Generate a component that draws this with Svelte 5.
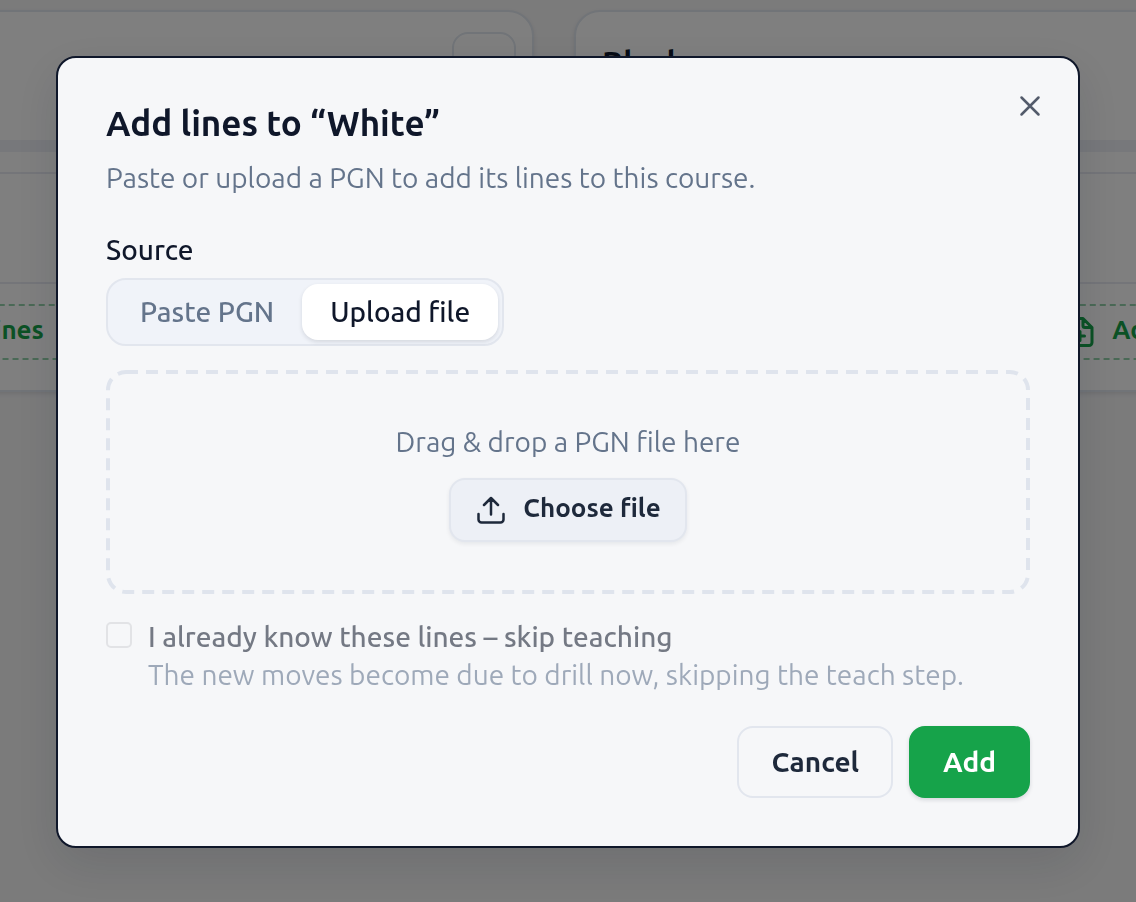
<script lang="ts">
  type Source = 'paste' | 'upload';

  const courses = ['White', 'Black'];
  const tabs: { id: Source; label: string }[] = [
    { id: 'paste', label: 'Paste PGN' },
    { id: 'upload', label: 'Upload file' },
  ];

  let target = $state('White');
  let open = $state(true);
  let source = $state<Source>('upload');
  let pgn = $state('');
  let skipTeaching = $state(false);
  let fileInput = $state<HTMLInputElement>();

  // skipping only makes sense once there is something to add
  let canSkip = $derived(source === 'paste' && pgn.trim() !== '');

  function openFor(course: string) {
    target = course;
    open = true;
  }
</script>

<main class="courses">
  {#each courses as course}
    <section class="course">
      <header class="course-head">
        <h2>{course}</h2>
        <button class="course-menu" type="button" aria-label="Course options"></button>
      </header>
      <div class="track"></div>
      <div class="course-gap"></div>
      <div class="course-body"></div>
      <div class="course-foot">
        <button class="add-lines" type="button" onclick={() => openFor(course)}>
          <svg viewBox="0 0 32 32" aria-hidden="true">
            <path d="M19 2.500H8a3 3 0 0 0-3 3v21a3 3 0 0 0 3 3h17a3 3 0 0 0 3-3V11.500zM19 2.500v7a2 2 0 0 0 2 2h7M16 15.500v9M11.500 20h9" />
          </svg>
          <span>Add lines</span>
        </button>
      </div>
    </section>
  {/each}
</main>

{#if open}
  <div class="backdrop">
    <div class="dialog" role="dialog" aria-modal="true" aria-labelledby="dialog-title">
      <button class="close" type="button" aria-label="Close" onclick={() => (open = false)}>
        <svg viewBox="0 0 24 24" aria-hidden="true"><path d="M3.500 3.500l17 17M20.500 3.500l-17 17" /></svg>
      </button>

      <header class="dialog-head">
        <h1 id="dialog-title">Add lines to “{target}”</h1>
        <p class="muted">Paste or upload a PGN to add its lines to this course.</p>
      </header>

      <div class="field">
        <span class="field-label" id="source-label">Source</span>
        <div class="segmented" role="group" aria-labelledby="source-label">
          {#each tabs as tab}
            <button
              type="button"
              class:active={source === tab.id}
              aria-pressed={source === tab.id}
              onclick={() => (source = tab.id)}
            >
              {tab.label}
            </button>
          {/each}
        </div>
      </div>

      {#if source === 'upload'}
        <div class="dropzone">
          <svg class="outline" aria-hidden="true"><rect rx="18" /></svg>
          <p class="muted">Drag &amp; drop a PGN file here</p>
          <button class="btn choose" type="button" onclick={() => fileInput?.click()}>
            <svg viewBox="0 0 32 32" aria-hidden="true">
              <path d="M16 20.500V4.500M9 11l7-7 7 7M3.500 20v5.500a3 3 0 0 0 3 3h19a3 3 0 0 0 3-3V20" />
            </svg>
            <span>Choose file</span>
          </button>
          <input bind:this={fileInput} type="file" accept=".pgn" aria-label="PGN file" hidden />
        </div>
      {:else}
        <textarea class="pgn" aria-label="PGN" bind:value={pgn}></textarea>
      {/if}

      <div class="skip">
        <input id="skip" type="checkbox" bind:checked={skipTeaching} disabled={!canSkip} />
        <div>
          <label for="skip">I already know these lines – skip teaching</label>
          <p>The new moves become due to drill now, skipping the teach step.</p>
        </div>
      </div>

      <footer>
        <button class="btn" type="button" onclick={() => (open = false)}>Cancel</button>
        <button class="btn primary" type="button">Add</button>
      </footer>
    </div>
  </div>
{/if}

<style>
  :global(body) {
    margin: 0;
    background: #f6f6f7;
    color: #0f172a;
    font-family: Ubuntu, Lato, 'Open Sans', sans-serif;
    font-size: 28px;
  }
  h1,
  h2,
  p {
    margin: 0;
  }
  button {
    font: inherit;
    color: inherit;
    cursor: pointer;
  }
  svg {
    width: 32px;
    height: 32px;
    flex: none;
    fill: none;
    stroke: currentColor;
    stroke-width: 2.5;
    stroke-linecap: round;
    stroke-linejoin: round;
  }

  /* course cards behind the dialog */
  .courses {
    display: grid;
    grid-template-columns: 103% 103%;
    justify-content: center;
    gap: 40px;
    padding: 10px 28px 16px 0;
    overflow: hidden;
  }
  .course {
    border: 2px solid #e2e8f0;
    border-radius: 26px;
    background: #fff;
    box-shadow: 0 2px 4px rgba(15, 23, 42, 0.1);
    overflow: hidden;
  }
  .course-head {
    display: flex;
    justify-content: space-between;
    height: 108px;
    padding: 20px 16px 0 26px;
  }
  .course-head h2 {
    font-size: 32px;
    line-height: 60px;
    font-weight: 700;
  }
  .course-menu {
    width: 64px;
    height: 64px;
    border: 2px solid #e2e8f0;
    border-radius: 16px;
    background: none;
  }
  .track {
    height: 12px;
    background: #eff1f6;
  }
  .course-gap {
    height: 20px;
  }
  .course-body {
    height: 108px;
    border: solid #e9ebf3;
    border-width: 2px 0;
  }
  .course-foot {
    padding: 20px 28px 30px;
  }
  .add-lines {
    display: flex;
    align-items: center;
    justify-content: center;
    gap: 16px;
    width: 100%;
    height: 56px;
    padding: 0;
    border: 2px dashed #95d3ac;
    border-radius: 16px;
    background: none;
    color: #16a34a;
    font-size: 26px;
    font-weight: 700;
  }
  .add-lines svg {
    stroke-width: 3;
  }

  .backdrop {
    position: fixed;
    inset: 0;
    padding: 56px;
    background: rgba(0, 0, 0, 0.5);
    overflow: auto;
  }
  .dialog {
    position: relative;
    display: flex;
    flex-direction: column;
    gap: 24px;
    padding: 48px;
    border: 2px solid #0f172a;
    border-radius: 20px;
    background: #f6f7f9;
    box-shadow: 0 16px 48px rgba(15, 23, 42, 0.12);
  }
  .close {
    position: absolute;
    top: 36px;
    right: 36px;
    display: flex;
    padding: 0;
    border: 0;
    background: none;
    color: #535b6b;
  }
  .close svg {
    width: 24px;
    height: 24px;
  }
  .dialog-head {
    margin-bottom: 12px;
  }
  h1 {
    margin-bottom: 18px;
    font-size: 35px;
    line-height: 34px;
    font-weight: 700;
  }
  .muted {
    color: #64748b;
    line-height: 40px;
  }
  .field-label {
    display: block;
    margin-bottom: 12px;
    line-height: 32px;
    font-weight: 500;
  }
  .segmented {
    display: inline-flex;
    padding: 4px;
    border: 2px solid #e2e6ee;
    border-radius: 20px;
    background: #f0f3f9;
    vertical-align: top;
  }
  .segmented button {
    height: 56px;
    padding: 0 28px 2px;
    border: 0;
    border-radius: 16px;
    background: none;
    color: #64748b;
    font-weight: 500;
  }
  .segmented .active {
    background: #fff;
    color: #0f172a;
    box-shadow: 0 2px 4px rgba(15, 23, 42, 0.12);
  }
  .dropzone {
    position: relative;
    display: flex;
    flex-direction: column;
    align-items: center;
    gap: 16px;
    padding: 52px;
  }
  .outline {
    position: absolute;
    inset: 0;
    width: 100%;
    height: 100%;
    pointer-events: none;
  }
  .outline rect {
    x: 2px;
    y: 2px;
    width: calc(100% - 4px);
    height: calc(100% - 4px);
    stroke: #dfe4ed;
    stroke-width: 4;
    stroke-linecap: butt;
    stroke-dasharray: 12 8;
  }
  .pgn {
    height: 224px;
    box-sizing: border-box;
    padding: 16px;
    border: 2px solid #e2e6ee;
    border-radius: 20px;
    font: inherit;
  }
  .btn {
    height: 72px;
    padding: 0 32px 2px;
    border: 2px solid #e2e6ee;
    border-radius: 16px;
    background: none;
    color: #1e293b;
    font-weight: 700;
  }
  .choose {
    display: flex;
    align-items: center;
    gap: 16px;
    height: 64px;
    padding: 0 24px;
    background: #edf0f6;
    font-size: 26px;
    box-shadow: 0 2px 4px rgba(15, 23, 42, 0.07);
  }
  .choose span,
  .add-lines span {
    padding-bottom: 6px;
  }
  .primary {
    border-color: #16a34a;
    background: #16a34a;
    color: #fff;
    box-shadow: 0 2px 4px rgba(15, 23, 42, 0.14);
  }
  .skip {
    display: flex;
    gap: 16px;
    margin-bottom: 8px;
    line-height: 38px;
  }
  .skip input {
    appearance: none;
    flex: none;
    width: 26px;
    height: 26px;
    margin: 4px 0 0;
    border: 2px solid #e2e3e6;
    border-radius: 5px;
  }
  .skip input:checked {
    background: #16a34a;
  }
  .skip label {
    display: block;
    color: #747984;
    font-weight: 500;
  }
  .skip p {
    color: #9ea9b9;
  }
  footer {
    display: flex;
    justify-content: flex-end;
    gap: 16px;
  }
</style>
